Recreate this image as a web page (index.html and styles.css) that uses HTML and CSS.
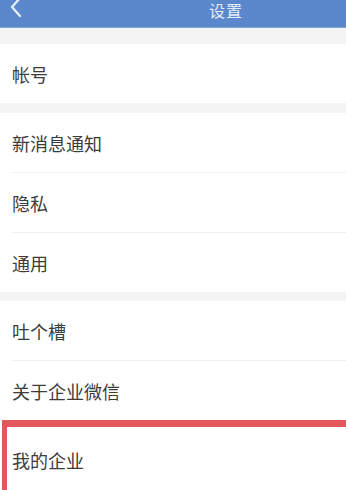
FILE: index.html
```html
<!DOCTYPE html>
<html lang="zh">
<head>
<meta charset="utf-8">
<link rel="stylesheet" href="styles.css">
</head>
<body>
<div class="page">
  <header class="topbar">
    <svg class="back" width="14" height="20" viewBox="0 0 14 20">
      <polyline points="10,-2 2,7 10,16" fill="none" stroke="#e9f0fb" stroke-width="2.2" stroke-linecap="round" stroke-linejoin="round"/>
    </svg>
    <div class="title">设置</div>
  </header>
  <div class="gap gap-top"></div>
  <div class="group">
    <div class="row">帐号</div>
  </div>
  <div class="gap gap-a"></div>
  <div class="group">
    <div class="row">新消息通知</div>
    <div class="sep"></div>
    <div class="row">隐私</div>
    <div class="sep"></div>
    <div class="row">通用</div>
  </div>
  <div class="gap gap-b"></div>
  <div class="group">
    <div class="row">吐个槽</div>
    <div class="sep"></div>
    <div class="row">关于企业微信</div>
    <div class="mark">
      <div class="row row-last">我的企业</div>
    </div>
  </div>
</div>
</body>
</html>
```
FILE: styles.css
```css
* { box-sizing: border-box; }
html, body { margin: 0; padding: 0; }
body {
  width: 346px;
  height: 490px;
  overflow: hidden;
  background: #ffffff;
  font-family: "Noto Sans CJK SC", "Noto Sans", sans-serif;
  color: #3a3a3a;
}
.page { display: flex; flex-direction: column; }
.topbar {
  height: 28px;
  background: #5b88cd;
  display: flex;
  align-items: flex-start;
  border-bottom: 1px solid #7ea2d8;
}
.back { margin-left: 10px; flex: none; }
.title {
  margin-left: auto;
  margin-right: 103px;
  margin-top: 2px;
  font-size: 16px;
  line-height: 16px;
  color: #e6edf8;
  letter-spacing: 1px;
}
.gap { background: #f4f4f4; }
.gap-top { height: 16px; }
.gap-a { height: 10px; }
.gap-b { height: 9px; }
.group { background: #ffffff; display: flex; flex-direction: column; }
.row {
  height: 59px;
  display: flex;
  align-items: center;
  padding-left: 12px;
  font-size: 18px;
  color: #3c3c3c;
}
.sep { height: 1px; background: #efefef; margin-left: 12px; }
.mark {
  margin-left: 2px;
  border-top: 7px solid #e0585b;
  border-left: 5px solid #e0585b;
}
.row-last { height: 66px; padding-left: 5px; }
```
